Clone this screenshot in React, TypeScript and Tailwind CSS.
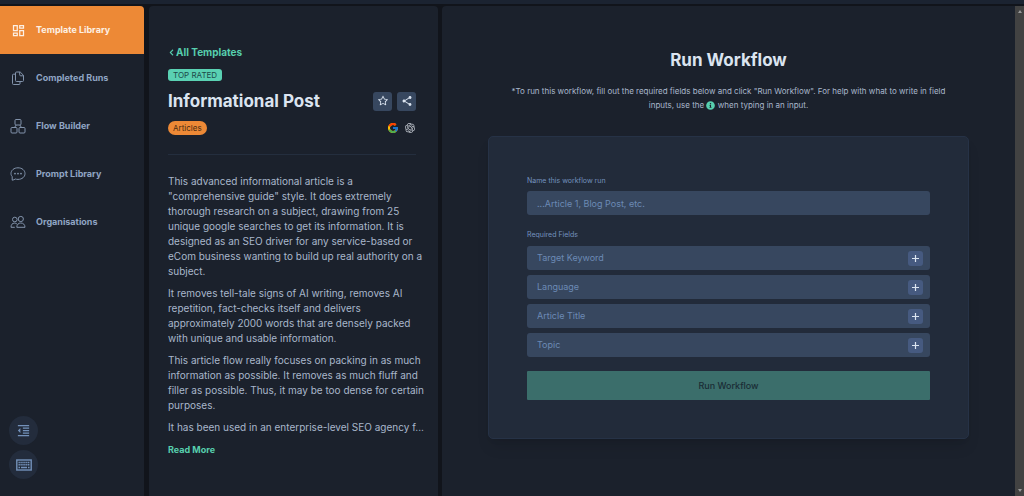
import type { ReactNode } from "react";
import { AiOutlineStar } from "react-icons/ai";
import { FaChevronLeft, FaInfoCircle } from "react-icons/fa";
import { FcGoogle } from "react-icons/fc";
import { MdFormatIndentDecrease, MdOutlineDashboard, MdShare } from "react-icons/md";
import { RiOpenaiFill } from "react-icons/ri";

interface NavItem { label: string; icon: ReactNode; active?: boolean; }

function FilesIcon() {
  return (
    <svg width="16" height="16" viewBox="0 0 16 16" fill="none" stroke="currentColor" strokeWidth="1" strokeLinejoin="round" aria-hidden="true">
      <path d="M6.500 2h3.700l3.300 3.300v5.200a1 1 0 0 1-1 1h-6a1 1 0 0 1-1-1V3a1 1 0 0 1 1-1Z" />
      <path d="M9.700 2v2.800a1 1 0 0 0 1 1h2.800" />
      <path d="M5.500 4.200H3.500a1 1 0 0 0-1 1v8.300a1 1 0 0 0 1 1h5.500a1 1 0 0 0 1-1v-2" />
    </svg>
  );
}

function BoxesIcon() {
  return (
    <svg width="16" height="16" viewBox="0 0 16 16" fill="none" stroke="currentColor" strokeWidth="1" aria-hidden="true">
      <rect x="5" y="1.500" width="6" height="5.500" rx="1" />
      <rect x="1" y="9.500" width="6" height="5.500" rx="1" />
      <rect x="9" y="9.500" width="6" height="5.500" rx="1" />
      <path d="M6.200 7 4.500 9.500M9.800 7l1.700 2.500" />
    </svg>
  );
}

function ChatIcon() {
  return (
    <svg width="16" height="16" viewBox="0 0 16 16" fill="none" stroke="currentColor" strokeWidth="1" aria-hidden="true">
      <path d="M2.200 14.200V10.600C1.300 9.600 1 8.700 1 7.600 1 4.300 4 1.800 8 1.800s7 2.500 7 5.800-3 5.800-7 5.800c-1 0-1.900-.1-2.700-.4-.9.600-1.900 1-3.100 1.200Z" strokeLinejoin="round" />
      <g fill="currentColor" stroke="none">
        <circle cx="5" cy="7.600" r=".9" />
        <circle cx="8" cy="7.600" r=".9" />
        <circle cx="11" cy="7.600" r=".9" />
      </g>
    </svg>
  );
}

function PeopleIcon() {
  return (
    <svg width="16" height="16" viewBox="0 0 16 16" fill="none" stroke="currentColor" strokeWidth="1" aria-hidden="true">
      <circle cx="4.800" cy="5.500" r="2.300" />
      <circle cx="10.800" cy="5" r="2.600" />
      <path d="M6.800 13.300c0-2.700 1.600-4.300 4-4.300s4.200 1.600 4.200 4.300H6.800ZM4.800 13.300H1c0-2.600 1.300-4.200 3.500-4.200 1 0 1.800.3 2.400.9" strokeLinejoin="round" />
    </svg>
  );
}

function KeyboardIcon() {
  return (
    <svg width="16" height="12" viewBox="0 0 16 12" fill="none" stroke="currentColor" aria-hidden="true">
      <rect x=".8" y="1" width="14.400" height="10" strokeWidth="1.400" />
      <path d="M2.500 3.500h11M2.500 5.800h11" strokeWidth="1.500" strokeDasharray="1.400 .5" />
      <path d="M2.500 8.500h1.500M5 8.500h6M12 8.500h1.500" strokeWidth="1.400" />
    </svg>
  );
}

const navItems: NavItem[] = [
  { label: "Template Library", icon: <MdOutlineDashboard size={15} />, active: true },
  { label: "Completed Runs", icon: <FilesIcon /> },
  { label: "Flow Builder", icon: <BoxesIcon /> },
  { label: "Prompt Library", icon: <ChatIcon /> },
  { label: "Organisations", icon: <PeopleIcon /> },
];

const paragraphs = [
  'This advanced informational article is a "comprehensive guide" style. It does extremely thorough research on a subject, drawing from 25 unique google searches to get its information. It is designed as an SEO driver for any service-based or eCom business wanting to build up real authority on a subject.',
  "It removes tell-tale signs of AI writing, removes AI repetition, fact-checks itself and delivers approximately 2000 words that are densely packed with unique and usable information.",
  "This article flow really focuses on packing in as much information as possible. It removes as much fluff and filler as possible. Thus, it may be too dense for certain purposes.",
  "It has been used in an enterprise-level SEO agency f...",
];

const fields = ["Target Keyword", "Language", "Article Title", "Topic"];

function Sidebar() {
  return (
    <aside className="flex w-36 shrink-0 flex-col justify-between overflow-hidden rounded-tr-sm bg-[#1b212c]">
      <nav>
        {navItems.map((item) => (
          <a key={item.label} href="#"
            className={`flex h-12 items-center gap-2.5 pl-2.5 text-[9px] font-bold ${item.active ? "bg-[#ed8936] text-[#fdf0e4]" : "text-[#90a5c4]"}`}>
            <span className={`flex w-4 justify-center ${item.active ? "" : "text-[#8293ab]"}`}>{item.icon}</span>
            {item.label}
          </a>
        ))}
      </nav>
      <div className="flex flex-col gap-[5px] px-[9px] pb-[17px] text-[#7391ba]">
        <button aria-label="Collapse menu" className="flex size-[29px] items-center justify-center rounded-full bg-[#232c3c]">
          <MdFormatIndentDecrease size={15} />
        </button>
        <button aria-label="Keyboard shortcuts" className="flex size-[29px] items-center justify-center rounded-full bg-[#232c3c]">
          <KeyboardIcon />
        </button>
      </div>
    </aside>
  );
}

function TemplateDetails() {
  return (
    <section className="w-[289px] shrink-0 rounded-t-sm bg-[#1b212c] pt-[38px] pl-[19px]">
      <div className="pr-[22px]">
        <a href="#" className="flex items-center gap-px text-[10px] leading-4 font-bold text-[#57cfae]">
          <FaChevronLeft size={7} />
          All Templates
        </a>
        <div className="mt-[9px] flex">
          <span className="rounded-[3px] bg-[#5ad1b3] px-[5px] text-[8px] leading-3 text-[#1d4a4a]">TOP RATED</span>
        </div>
        <div className="mt-2.5 flex items-center justify-between">
          <h1 className="text-[17px] leading-5 font-bold text-[#dbe4f0]">Informational Post</h1>
          <div className="flex gap-[5px] text-[#dbe4f0]">
            <button aria-label="Add to favourites" className="flex size-[19px] items-center justify-center rounded-[3px] bg-[#37475f]">
              <AiOutlineStar size={12} />
            </button>
            <button aria-label="Share" className="flex size-[19px] items-center justify-center rounded-[3px] bg-[#37475f]">
              <MdShare size={12} />
            </button>
          </div>
        </div>
        <div className="mt-2.5 flex items-center justify-between">
          <span className="rounded-full bg-[#ed8936] px-[5px] text-[8px] leading-[14px] text-[#4a2c12]">Articles</span>
          <div className="flex items-center gap-[5px] text-[#cbd0d8]">
            <FcGoogle size={12} />
            <RiOpenaiFill size={12} />
          </div>
        </div>
        <hr className="mt-[19px] border-[#242e3e]" />
      </div>
      <div className="mt-[19px] flex flex-col gap-[7px] pr-[11px] text-[10px] leading-[15px] text-[#a9b7cb]">
        {paragraphs.map((text) => <p key={text}>{text}</p>)}
      </div>
      <button className="mt-[7px] block text-[9px] leading-[15px] font-bold text-[#57cfae]">Read More</button>
    </section>
  );
}

function RunWorkflow() {
  return (
    <main className="min-w-0 flex-1 rounded-tl-sm bg-[#1b212c] px-[46px] pt-[42px] pb-12">
      <h2 className="text-center text-[17px] leading-6 font-bold text-[#dbe4f0]">Run Workflow</h2>
      <p className="mt-3 px-5 text-center text-[8px] leading-[14px] text-[#a9b7cb]">
        *To run this workflow, fill out the required fields below and click "Run Workflow". For help with what to write in field inputs, use the{" "}
        <FaInfoCircle size={9} className="inline text-[#57cfae]" />{" "}
        when typing in an input.
      </p>
      <form className="mt-6 flex flex-col rounded-[5px] border border-[#263246] bg-[#222b3a] p-[38px] text-[9px] shadow-lg">
        <label htmlFor="run-name" className="text-[7px] leading-3 text-[#7492bf]">Name this workflow run</label>
        <input id="run-name" placeholder="...Article 1, Blog Post, etc."
          className="mt-1 h-6 rounded-[3px] bg-[#37475f] px-2.5 placeholder:text-[#6c8ab5]" />
        <fieldset className="mt-3.5 flex flex-col gap-[5px]">
          <legend className="mb-[5px] text-[7px] leading-3 text-[#7492bf]">Required Fields</legend>
          {fields.map((field) => (
            <div key={field} className="flex h-6 items-center rounded-[3px] bg-[#37475f] pr-[7px] pl-2.5">
              <input aria-label={field} placeholder={field} className="min-w-0 flex-1 placeholder:text-[#6c8ab5]" />
              <button type="button" aria-label={`Insert into ${field}`}
                className="flex size-[15px] items-center justify-center rounded-[3px] bg-[#465a80] text-[#dbe4f0]">
                <svg width="7" height="7" viewBox="0 0 7 7" stroke="currentColor" strokeWidth="1.200" aria-hidden="true"><path d="M3.500 0v7M0 3.500h7" /></svg>
              </button>
            </div>
          ))}
        </fieldset>
        <button type="submit" className="mt-3.5 h-[29px] rounded-[1px] bg-[#3b6e6b] text-[9px] font-medium text-[#1a2c35]">Run Workflow</button>
      </form>
    </main>
  );
}

export default function App() {
  return (
    <div className="flex min-h-screen flex-col bg-[#11141b] font-['Inter',sans-serif]">
      <header className="mb-0.5 h-1 bg-[#1b2331]" />
      <div className="flex flex-1">
        <Sidebar />
        <div className="flex min-w-0 flex-1 gap-1 pl-[5px]">
          <TemplateDetails />
          <RunWorkflow />
        </div>
        <div className="flex w-[9px] flex-col items-center justify-between bg-[#424242] py-1">
          <svg width="4" height="3" viewBox="0 0 4 3" fill="#9a9a9a" aria-hidden="true"><path d="M2 0 4 3H0z" /></svg>
          <svg width="4" height="3" viewBox="0 0 4 3" fill="#9a9a9a" aria-hidden="true"><path d="M2 3 0 0h4z" /></svg>
        </div>
      </div>
    </div>
  );
}
